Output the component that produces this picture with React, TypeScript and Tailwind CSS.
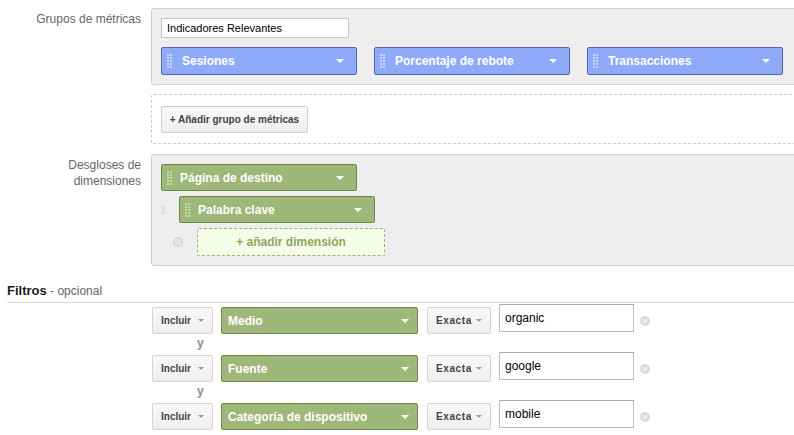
import React from "react";

const font = { fontFamily: '"Liberation Sans", Arial, sans-serif' };

function Grip({ color = "#d8e0fb" }: { color?: string }) {
  const dots = [];
  for (let r = 0; r < 5; r++) {
    for (let c = 0; c < 2; c++) {
      dots.push(<rect key={`${r}-${c}`} x={c * 3} y={r * 3} width="2" height="2" fill={color} />);
    }
  }
  return (
    <svg width="5" height="14" viewBox="0 0 5 14" className="shrink-0">
      {dots}
    </svg>
  );
}

function Arrow({ color = "#ffffff", w = 8, h = 4 }: { color?: string; w?: number; h?: number }) {
  return (
    <svg width={w} height={h} viewBox={`0 0 ${w} ${h}`} className="shrink-0">
      <polygon points={`0,0 ${w},0 ${w / 2},${h}`} fill={color} />
    </svg>
  );
}

function BlueChip({ label }: { label: string }) {
  return (
    <div className="flex h-[28px] w-[196px] items-center rounded-[2px] border border-[#5468aa] bg-[#8eaaf9] pl-[5px] pr-[12px]">
      <Grip color="#c9d5fc" />
      <span className="ml-[10px] flex-1 text-[12px] font-bold text-white">{label}</span>
      <Arrow />
    </div>
  );
}

function GreenChip({ label }: { label: string }) {
  return (
    <div className="flex h-[27px] w-[196px] items-center rounded-[2px] border border-[#6c8a45] bg-[#9db878] pl-[5px] pr-[12px]">
      <Grip color="#c5d6ab" />
      <span className="ml-[8px] flex-1 text-[12px] font-bold text-white">{label}</span>
      <Arrow />
    </div>
  );
}

function GrayButton({ label, w, track = "" }: { label: string; w: string; track?: string }) {
  return (
    <div className={`flex h-[27px] ${w} items-center justify-between rounded-[2px] border border-[#d3d3d3] bg-gradient-to-b from-[#fafafa] to-[#eeeeee] pl-[8px] pr-[8px]`}>
      <span className={`text-[10px] font-bold text-[#444] ${track}`}>{label}</span>
      <Arrow color="#999999" w={6} h={3} />
    </div>
  );
}

function CloseIcon() {
  return (
    <svg width="10" height="10" viewBox="0 0 10 10" className="shrink-0">
      <circle cx="5" cy="5" r="5" fill="#d9d9d9" />
      <path d="M3 3 L7 7 M7 3 L3 7" stroke="#f2f2f2" strokeWidth="1.3" />
    </svg>
  );
}

function Row({ dim, value }: { dim: string; value: string }) {
  return (
    <div className="flex items-start">
      <div className="mt-[3px]">
        <GrayButton label="Incluir" w="w-[61px]" />
      </div>
      <div className="ml-[8px] mt-[3px]">
        <div className="flex h-[27px] w-[197px] items-center rounded-[2px] border border-[#6c8a45] bg-[#9db878] pl-[6px] pr-[8px]">
          <span className="flex-1 text-[12px] font-bold text-white">{dim}</span>
          <Arrow />
        </div>
      </div>
      <div className="ml-[9px] mt-[3px]">
        <GrayButton label="Exacta" w="w-[64px]" track="tracking-[0.6px]" />
      </div>
      <div className="ml-[8px] h-[28px] w-[135px] border border-[#bdbdbd] border-t-[#a8a8a8] bg-white pl-[5px] pt-[6px] text-[12px] leading-[14px] text-black">
        {value}
      </div>
      <div className="ml-[6px] mt-[12px]">
        <CloseIcon />
      </div>
    </div>
  );
}

export default function App() {
  return (
    <div className="h-[435px] w-[794px] overflow-hidden bg-white" style={font}>
      {/* Grupos de métricas */}
      <div className="flex pt-[8px]">
        <div className="w-[151px] shrink-0 pr-[10px] pt-[4px] text-right text-[12px] leading-[15px] text-[#666]">
          Grupos de métricas
        </div>
        <div className="-mr-[20px] flex-1">
          <div className="rounded-[3px] border border-[#cfcfcf] bg-[#eeeeee] pb-[9px] pl-[9px] pt-[9px]">
            <div className="flex h-[20px] w-[188px] items-center border border-[#c8c8c8] bg-white pl-[5px] text-[11px] text-black">
              Indicadores Relevantes
            </div>
            <div className="mt-[9px] flex gap-[17px]">
              <BlueChip label="Sesiones" />
              <BlueChip label="Porcentaje de rebote" />
              <BlueChip label="Transacciones" />
            </div>
          </div>
          <div className="mt-[9px] rounded-[3px] border border-dashed border-[#cccccc] pb-[10px] pl-[9px] pt-[11px]">
            <div className="flex h-[27px] w-[147px] items-center justify-center rounded-[2px] border border-[#d0d0d0] bg-gradient-to-b from-[#fafafa] to-[#eeeeee] text-[10px] font-bold text-[#444]">
              + Añadir grupo de métricas
            </div>
          </div>
        </div>
      </div>

      {/* Desgloses */}
      <div className="flex pt-[10px]">
        <div className="w-[151px] shrink-0 pr-[10px] pt-[3px] text-right text-[12px] leading-[16px] text-[#666]">
          Desgloses de
          <br />
          dimensiones
        </div>
        <div className="-mr-[20px] flex-1">
          <div className="rounded-[3px] border border-[#cfcfcf] bg-[#eeeeee] pb-[9px] pl-[9px] pt-[9px]">
            <GreenChip label="Página de destino" />
            <div className="mt-[5px] flex items-center">
              <div className="flex w-[18px] items-center">
                <div className="h-[10px] w-[4px] rounded-r-full border border-l-0 border-[#d8d8d8] bg-[#e6e6e6]" />
              </div>
              <GreenChip label="Palabra clave" />
            </div>
            <div className="mt-[5px] flex items-center">
              <div className="flex w-[36px] items-center pl-[12px]">
                <div className="h-[10px] w-[10px] rounded-full border-2 border-[#d8d8d8] bg-[#e4e4e4]" />
              </div>
              <div className="flex h-[28px] w-[188px] items-center justify-center rounded-[2px] border border-dashed border-[#9cb26f] bg-[#f5fce8] text-[12px] font-bold text-[#8ca85c]">
                + añadir dimensión
              </div>
            </div>
          </div>
        </div>
      </div>

      {/* Filtros */}
      <div className="ml-[7px] mt-[16px] border-b border-[#dddddd] pb-[3px] leading-[15px]">
        <span className="text-[13px] font-bold text-[#1a1a1a]">Filtros</span>
        <span className="text-[12px] text-[#666]"> - opcional</span>
      </div>
      <div className="ml-[152px] mt-[1px] flex flex-col">
        <Row dim="Medio" value="organic" />
        <div className="h-[18px] pl-[45px] text-[12px] font-bold leading-[18px] text-[#8c8c8c]">y</div>
        <Row dim="Fuente" value="google" />
        <div className="h-[18px] pl-[45px] text-[12px] font-bold leading-[18px] text-[#8c8c8c]">y</div>
        <Row dim="Categoría de dispositivo" value="mobile" />
      </div>
    </div>
  );
}
